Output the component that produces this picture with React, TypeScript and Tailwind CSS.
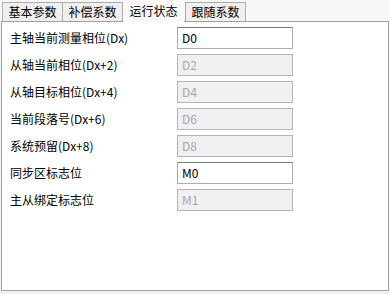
import React from 'react'

const tabs = ['基本参数', '补偿系数', '运行状态', '跟随系数']

const rows: { label: string; value: string; enabled: boolean }[] = [
  { label: '主轴当前测量相位(Dx)', value: 'D0', enabled: true },
  { label: '从轴当前相位(Dx+2)', value: 'D2', enabled: false },
  { label: '从轴目标相位(Dx+4)', value: 'D4', enabled: false },
  { label: '当前段落号(Dx+6)', value: 'D6', enabled: false },
  { label: '系统预留(Dx+8)', value: 'D8', enabled: false },
  { label: '同步区标志位', value: 'M0', enabled: true },
  { label: '主从绑定标志位', value: 'M1', enabled: false },
]

export default function App() {
  return (
    <div
      className="w-[390px] h-[294px] bg-[#f7f7f7] text-[12px] text-black overflow-hidden flex flex-col"
      style={{ fontFamily: '"Noto Sans CJK SC", "Noto Sans", sans-serif' }}
    >
      {/* 标签页 */}
      <div className="flex items-end h-[21px] pl-[2px] relative z-10">
        {tabs.map((t, i) =>
          i === 2 ? (
            <div
              key={t}
              className="h-[22px] w-[61px] -mb-[1px] flex items-center justify-center bg-[#f9f9f9] leading-none"
            >
              {t}
            </div>
          ) : (
            <div
              key={t}
              className={`h-[19px] w-[61px] flex items-center justify-center border border-b-0 border-[#acacac] bg-[#efefef] leading-none ${
                i === 1 ? '-ml-[1px]' : ''
              } ${i === 3 ? 'ml-[1px]' : ''}`}
            >
              {t}
            </div>
          )
        )}
      </div>

      {/* 内容面板 */}
      <div className="ml-[1px] mr-[1px] h-[270px] border border-[#a0a0a0] bg-white flex flex-col gap-[5px] pt-[5px] pl-[8px]">
        {rows.map((r) => (
          <div key={r.label} className="flex items-center h-[22px]">
            <div className="w-[167px] leading-none whitespace-nowrap">{r.label}</div>
            <div
              className={`w-[116px] h-[22px] flex items-center px-[4px] leading-none ${
                r.enabled
                  ? 'bg-white border border-[#abadb3] border-t-[#7a7a7a] text-black'
                  : 'bg-[#f0f0f3] border border-[#b4b4b4] text-[#a8a8a8]'
              }`}
            >
              {r.value}
            </div>
          </div>
        ))}
      </div>
      <div className="flex-1 bg-[#f0f0f0]" />
    </div>
  )
}
